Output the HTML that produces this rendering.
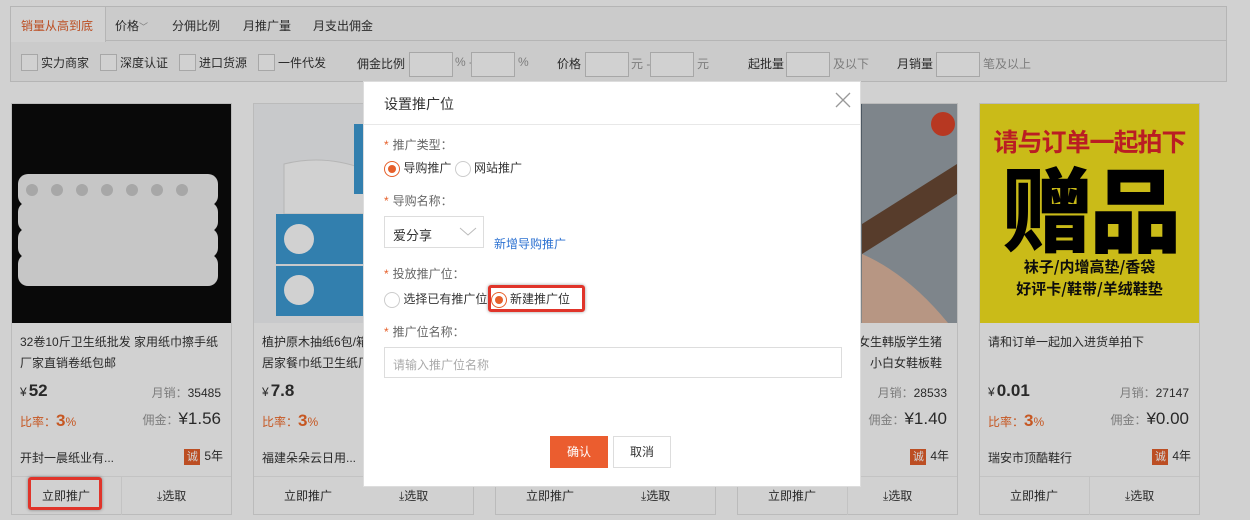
<!DOCTYPE html>
<html><head><meta charset="utf-8"><style>
*{margin:0;padding:0;box-sizing:border-box}
body{width:1250px;height:520px;overflow:hidden;position:relative;background:#fff;font-family:"Liberation Sans","Noto Sans CJK SC",sans-serif;font-size:12px;color:#333}
.abs{position:absolute}
.panel{left:10px;top:6px;width:1217px;height:76px;border:1px solid #ddd;background:#f8f8f8}
.tabs{left:0;top:0;width:1215px;height:34px;border-bottom:1px solid #ddd}
.tab{position:absolute;top:10px;font-size:12px;color:#333}
.cb{position:absolute;top:47px;width:17px;height:17px;border:1px solid #ccc;background:#fff}
.ct{position:absolute;top:47px;font-size:12px}
.inp{position:absolute;top:45px;height:25px;background:#fff;border:1px solid #ccc}
.card{position:absolute;top:103px;width:221px;height:412px;border:1px solid #e5e5e5;background:#fff}
.card .img{position:absolute;left:0;top:0;width:219px;height:219px;overflow:hidden}
.t{position:absolute;left:8px;top:228px;width:205px;line-height:21px;font-size:12px;color:#333;white-space:nowrap}
.price{position:absolute;left:8px;top:277px;font-size:17px;font-weight:bold}
.price small{font-size:12px;font-weight:normal;margin-right:2px}
.ms{position:absolute;right:10px;top:280px;color:#999}
.ms b{color:#333;font-weight:normal}
.rate{position:absolute;left:8px;top:307px;color:#f26b2a}
.rate b{font-size:17px}
.yj{position:absolute;right:10px;top:305px;color:#999}
.yj b{font-size:17px;color:#333;font-weight:normal}
.shop{position:absolute;left:8px;top:345px}
.yr{position:absolute;right:8px;top:343px}
.cheng{display:inline-block;width:16px;height:16px;background:#e6602b;color:#fff;font-size:11px;text-align:center;line-height:16px;margin-right:4px;vertical-align:middle}
.btns{position:absolute;left:0;top:372px;width:219px;height:38px;border-top:1px solid #eee}
.btns div{position:absolute;top:10px}
.overlay{left:0;top:0;width:1250px;height:520px;background:rgba(0,0,0,0.18)}
.modal{left:363px;top:81px;width:498px;height:406px;background:#fff;border:1px solid #ddd}
.lbl{position:absolute;left:20px;color:#666;font-size:12px}
.lbl i{color:#e6602b;font-style:normal;margin-right:4px}
.rad{display:inline-block;width:16px;height:16px;border-radius:50%;border:1px solid #ccc;vertical-align:middle;position:relative;background:#fff}
.rad.on{border-color:#e6602b}
.rad.on:after{content:"";position:absolute;left:3px;top:3px;width:8px;height:8px;border-radius:50%;background:#e6602b}
</style></head><body>
<div class="abs panel">
  <div class="abs tabs">
    <div class="abs" style="left:0;top:0;width:95px;height:35px;background:#fff;border-right:1px solid #ddd"></div>
    <div class="tab" style="left:10px;color:#e6602b">销量从高到底</div>
    <div class="tab" style="left:104px">价格<span style="font-size:9px;color:#999">﹀</span></div>
    <div class="tab" style="left:161px">分佣比例</div>
    <div class="tab" style="left:232px">月推广量</div>
    <div class="tab" style="left:302px">月支出佣金</div>
  </div>
  <div class="cb" style="left:10px"></div><div class="ct" style="left:30px">实力商家</div>
  <div class="cb" style="left:89px"></div><div class="ct" style="left:109px">深度认证</div>
  <div class="cb" style="left:168px"></div><div class="ct" style="left:188px">进口货源</div>
  <div class="cb" style="left:247px"></div><div class="ct" style="left:267px">一件代发</div>
  <div class="abs" style="left:346px;top:48px">佣金比例</div>
  <div class="inp" style="left:398px;width:44px"></div>
  <div class="abs" style="left:444px;top:48px;color:#999">% -</div>
  <div class="inp" style="left:460px;width:44px"></div>
  <div class="abs" style="left:507px;top:48px;color:#999">%</div>
  <div class="abs" style="left:546px;top:48px">价格</div>
  <div class="inp" style="left:574px;width:44px"></div>
  <div class="abs" style="left:620px;top:48px;color:#999">元 -</div>
  <div class="inp" style="left:639px;width:44px"></div>
  <div class="abs" style="left:686px;top:48px;color:#999">元</div>
  <div class="abs" style="left:737px;top:48px">起批量</div>
  <div class="inp" style="left:775px;width:44px"></div>
  <div class="abs" style="left:822px;top:48px;color:#999">及以下</div>
  <div class="abs" style="left:886px;top:48px">月销量</div>
  <div class="inp" style="left:925px;width:44px"></div>
  <div class="abs" style="left:972px;top:48px;color:#999">笔及以上</div>
</div>

<!-- card 1 -->
<div class="card" style="left:11px">
  <div class="img" style="background:#0b0b0b">
    <svg width="219" height="219"><g fill="#f2f2f2">
    <rect x="6" y="70" width="200" height="32" rx="10"/><rect x="6" y="98" width="200" height="30" rx="10"/><rect x="6" y="124" width="200" height="30" rx="10"/><rect x="6" y="150" width="200" height="32" rx="10"/></g>
    <g fill="#ccc"><circle cx="20" cy="86" r="6"/><circle cx="45" cy="86" r="6"/><circle cx="70" cy="86" r="6"/><circle cx="95" cy="86" r="6"/><circle cx="120" cy="86" r="6"/><circle cx="145" cy="86" r="6"/><circle cx="170" cy="86" r="6"/></g></svg>
  </div>
  <div class="t">32卷10斤卫生纸批发 家用纸巾擦手纸<br>厂家直销卷纸包邮</div>
  <div class="price"><small>¥</small>52</div><div class="ms">月销：<b>35485</b></div>
  <div class="rate">比率：<b>3</b>%</div><div class="yj">佣金：<b>¥1.56</b></div>
  <div class="shop">开封一晨纸业有...</div><div class="yr"><span class="cheng">诚</span>5年</div>
  <div class="btns"><div style="left:30px">立即推广</div><div style="left:145px">⤓选取</div><div style="left:109px;top:0;width:1px;height:38px;background:#eee"></div></div>
</div>
<!-- card 2 -->
<div class="card" style="left:253px">
  <div class="img" style="background:#f4f6f8">
    <svg width="219" height="219"><path d="M30 60 Q70 50 110 65 L115 110 L30 110Z" fill="#fff" stroke="#ddd"/>
    <rect x="22" y="110" width="200" height="50" fill="#3d9bd5"/><rect x="22" y="162" width="200" height="50" fill="#3d9bd5"/><rect x="100" y="20" width="120" height="70" fill="#3d9bd5"/>
    <circle cx="45" cy="135" r="15" fill="#fff"/><circle cx="45" cy="186" r="15" fill="#fff"/></svg>
  </div>
  <div class="t">植护原木抽纸6包/箱 家用<br>居家餐巾纸卫生纸厂家</div>
  <div class="price"><small>¥</small>7.8</div>
  <div class="rate">比率：<b>3</b>%</div>
  <div class="shop">福建朵朵云日用...</div>
  <div class="btns"><div style="left:30px">立即推广</div><div style="left:145px">⤓选取</div></div>
</div>
<!-- card 3 -->
<div class="card" style="left:495px">
  <div class="btns"><div style="left:30px">立即推广</div><div style="left:145px">⤓选取</div></div>
</div>
<!-- card 4 -->
<div class="card" style="left:737px">
  <div class="img" style="background:linear-gradient(135deg,#3a4a5c,#7e8a92 60%,#d8cfc6)">
    <svg width="219" height="219"><rect x="124" y="0" width="95" height="219" fill="#9aa3aa"/><path d="M124 120 L219 60 L219 90 L124 150Z" fill="#6b4a35"/><path d="M124 150 Q170 170 210 219 L124 219Z" fill="#e0b8a0"/><circle cx="205" cy="20" r="12" fill="#e0452a"/></svg>
  </div>
  <div class="t" style="left:auto;right:15px;width:auto;text-align:right">休闲鞋女生韩版学生猪<br>小白女鞋板鞋</div>
  <div class="ms">月销：<b>28533</b></div>
  <div class="yj">佣金：<b>¥1.40</b></div>
  <div class="yr"><span class="cheng">诚</span>4年</div>
  <div class="btns"><div style="left:30px">立即推广</div><div style="left:145px">⤓选取</div><div style="left:109px;top:0;width:1px;height:38px;background:#eee"></div></div>
</div>
<!-- card 5 -->
<div class="card" style="left:979px">
  <div class="img" style="background:#f7e41e;text-align:center;font-weight:bold;font-family:'Noto Sans CJK SC',sans-serif">
    <div style="color:#e3242b;font-size:25px;margin-top:22px;line-height:30px;letter-spacing:-1px">请与订单一起拍下</div>
    <div style="color:#000;font-size:92px;line-height:100px;font-weight:900;letter-spacing:-4px">赠品</div>
    <div style="color:#111;font-size:15px;line-height:22px">袜子/内增高垫/香袋<br>好评卡/鞋带/羊绒鞋垫</div>
  </div>
  <div class="t">请和订单一起加入进货单拍下</div>
  <div class="price"><small>¥</small>0.01</div><div class="ms">月销：<b>27147</b></div>
  <div class="rate">比率：<b>3</b>%</div><div class="yj">佣金：<b>¥0.00</b></div>
  <div class="shop">瑞安市顶酷鞋行</div><div class="yr"><span class="cheng">诚</span>4年</div>
  <div class="btns"><div style="left:30px">立即推广</div><div style="left:145px">⤓选取</div><div style="left:109px;top:0;width:1px;height:38px;background:#eee"></div></div>
</div>

<div class="abs overlay"></div>
<div class="abs" style="left:28px;top:477px;width:74px;height:33px;border:3px solid #e0342a;border-radius:3px;box-shadow:0 0 3px rgba(0,0,0,.4)"></div>

<div class="abs modal">
  <div class="abs" style="left:20px;top:12px;font-size:14px;color:#333">设置推广位</div>
  <svg class="abs" style="left:471px;top:10px" width="16" height="16"><path d="M1 1L15 15M15 1L1 15" stroke="#999" stroke-width="1.3"/></svg>
  <div class="abs" style="left:0;top:42px;width:496px;height:1px;background:#e8e8e8"></div>
  <div class="lbl" style="top:54px"><i>*</i>推广类型：</div>
  <div class="abs" style="left:20px;top:77px;white-space:nowrap"><span class="rad on"></span> 导购推广 <span class="rad"></span> 网站推广</div>
  <div class="lbl" style="top:110px"><i>*</i>导购名称：</div>
  <div class="abs" style="left:20px;top:134px;width:100px;height:32px;border:1px solid #ddd;padding:8px 0 0 8px;font-size:13px">爱分享
    <svg class="abs" style="left:74px;top:10px" width="18" height="10"><path d="M1 1L9 8L17 1" stroke="#bbb" fill="none"/></svg></div>
  <div class="abs" style="left:130px;top:153px;color:#2d72d2">新增导购推广</div>
  <div class="lbl" style="top:183px"><i>*</i>投放推广位：</div>
  <div class="abs" style="left:20px;top:208px;white-space:nowrap"><span class="rad"></span> 选择已有推广位 <span class="rad on"></span> 新建推广位</div>
  <div class="abs" style="left:124px;top:203px;width:97px;height:27px;border:3px solid #e0342a;border-radius:3px;box-shadow:0 0 3px rgba(0,0,0,.4)"></div>
  <div class="lbl" style="top:241px"><i>*</i>推广位名称：</div>
  <div class="abs" style="left:20px;top:265px;width:458px;height:31px;border:1px solid #ddd;color:#aaa;padding:8px 0 0 8px">请输入推广位名称</div>
  <div class="abs" style="left:186px;top:354px;width:58px;height:32px;background:#eb5d2f;color:#fff;text-align:center;line-height:32px">确认</div>
  <div class="abs" style="left:249px;top:354px;width:58px;height:32px;border:1px solid #ddd;text-align:center;line-height:30px;color:#333">取消</div>
</div>
</body></html>
